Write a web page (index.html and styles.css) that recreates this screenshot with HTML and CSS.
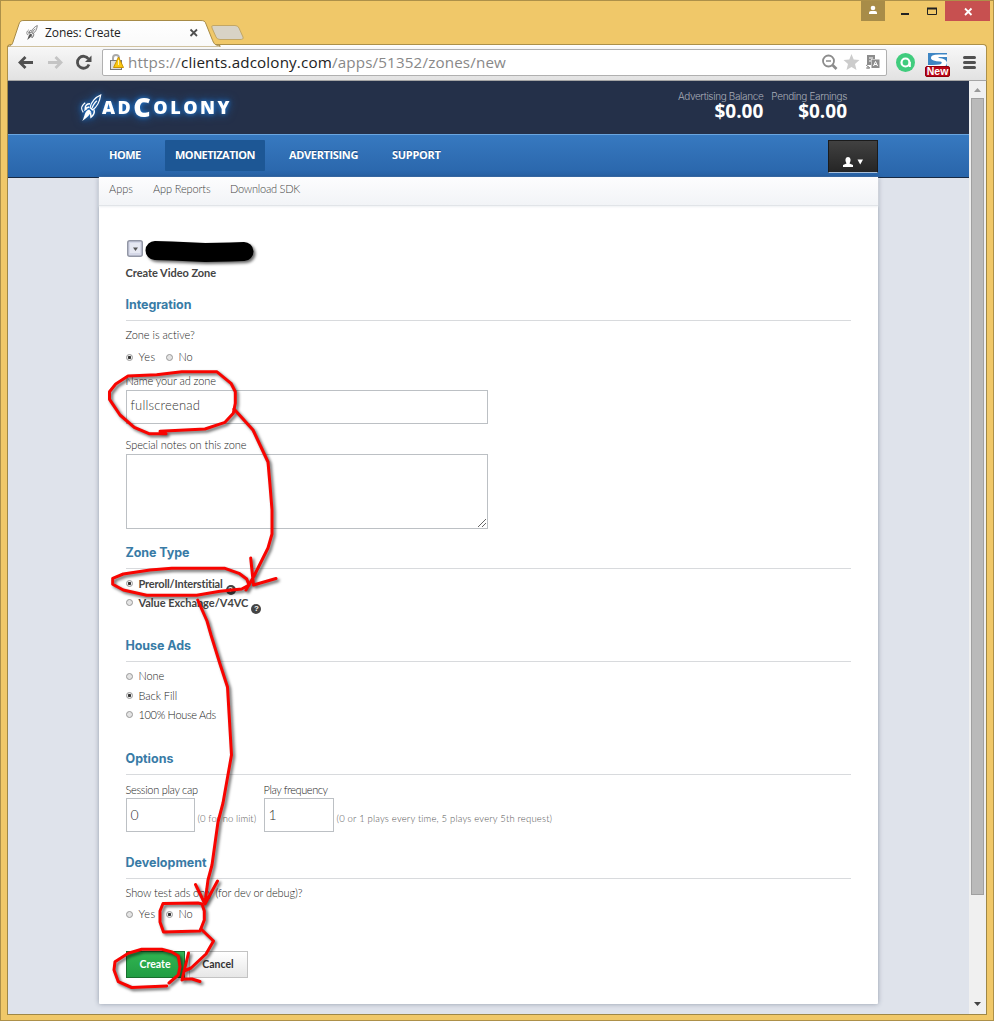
FILE: index.html
```html
<!DOCTYPE html>
<html lang="en">
<head>
<meta charset="utf-8">
<title>Zones: Create</title>
<link rel="stylesheet" href="styles.css">
</head>
<body>
<svg width="0" height="0" class="defs">
  <symbol id="rocket" viewBox="0 0 22 30">
    <path d="M21 1C16 3 11 8 10 14L12.500 16.500C18 13 20 8 21 1ZM17 7C14 10 12.500 12 12 15" fill="none" stroke="currentColor" stroke-width="1.300"/>
    <path d="M10 10C7 10 5 12 5 15L9 13.500M14 16C15 19 13.500 22 11 24L10.500 19" fill="none" stroke="currentColor" stroke-width="1.500"/>
    <path d="M9 16C4 18 5 22 2 28C7 24 10 22 11 18Z" fill="currentColor"/>
    <path d="M5 9C1 12 0 15 3 19M4 17L7 15" fill="none" stroke="currentColor" stroke-width="1.200"/>
  </symbol>
</svg>
<div class="window">
  <header class="titlebar">
    <svg class="tabs" width="250" height="28" viewBox="0 0 250 28">
      <defs><linearGradient id="tab" x2="0" y2="1"><stop offset="0" stop-color="#fff"/><stop offset="1" stop-color="#f9f9f9"/></linearGradient></defs>
      <path d="M0 27.500C4 27 5 26 6 23L12 5C13 2 14 1.500 17 1.500H193C197 1.500 198 2 199 5L205 20C207 25 208 26.500 213 26.500V28H0Z" fill="url(#tab)" stroke="#a78b47"/>
      <path d="M206 6.500H228Q231 6.500 232 9L236 18Q237 20.500 233 20.500H213Q210 20.500 209 18L205 9Q204 6.500 206 6.500Z" fill="#d8d3c6" stroke="#c3a765"/>
      <path d="M183.500 10.500L190 17M190 10.500L183.500 17" stroke="#505050" stroke-width="1.800"/>
    </svg>
    <div class="tab-label"><svg class="favicon"><use href="#rocket"/></svg><span>Zones: Create</span></div>
    <div class="controls">
      <span class="user"><svg width="24" height="20"><circle cx="12" cy="7" r="2.300" fill="#fff"/><path d="M8 13V11.500Q8 10 10 10H14Q16 10 16 11.500V13Z" fill="#fff"/></svg></span>
      <svg width="60" height="20"><path d="M16 13H24" stroke="#222" stroke-width="2"/><path d="M42.500 7.500H51.500V13.500H42.500Z" fill="none" stroke="#222"/><path d="M42 7.500H52" stroke="#222" stroke-width="2"/></svg>
      <span class="close"><svg width="45" height="20"><path d="M20 7.500L26.500 14M26.500 7.500L20 14" stroke="#fff" stroke-width="1.800"/></svg></span>
    </div>
  </header>
  <div class="toolbar">
    <svg class="nav-icons" width="96" height="36" viewBox="0 0 96 36">
      <g fill="none" stroke-width="2.800"><path d="M14 17.500H27M19.500 12L14 17.500L19.500 23" stroke="#505050"/><path d="M42 17.500H55M49.500 12L55 17.500L49.500 23" stroke="#c4c4c4"/><path d="M82.500 14A6 6 0 1 0 83 19.500" stroke="#505050"/></g><path d="M85.500 10.500V17H79Z" fill="#505050"/>
    </svg>
    <div class="address">
      <svg width="18" height="20" viewBox="0 0 18 20"><path d="M4 8V5Q4 2 7 2Q10 2 10 5V8" fill="none" stroke="#aaa" stroke-width="2"/><rect x="1.500" y="7.500" width="11" height="9" fill="#ddd" stroke="#777"/><path d="M9.500 4L14.500 14.500H4.500Z" fill="#fbc810" stroke="#c99306"/><path d="M9.500 7V12" stroke="#fff4b0"/></svg>
      <p class="url">https://<b>clients.adcolony.com</b>/apps/51352/zones/new</p>
      <svg class="url-icons" width="62" height="22" viewBox="0 0 62 22">
        <circle cx="7.500" cy="9" r="5.500" fill="none" stroke="#8c8c8c" stroke-width="1.800"/><path d="M5 9H10" stroke="#8c8c8c" stroke-width="1.500"/><path d="M11.500 13L15.500 17" stroke="#8c8c8c" stroke-width="2.600"/>
        <path d="M30.500 2L32.700 7.500L38.500 8L34 12L35.500 18L30.500 15L25.500 18L27 12L22.500 8L28.300 7.500Z" fill="#ccc"/>
        <path d="M46 3H54V7H50V13H46Z" fill="#8c8c8c"/><path d="M48 6H52M48 9H50" stroke="#fff"/><rect x="50.500" y="7.500" width="8" height="8.500" fill="#8c8c8c"/><path d="M52.500 14L54.500 9.500L56.500 14M53 12.500H56" fill="none" stroke="#fff"/><path d="M45 13L49 16M45 16H49M47 14V17" stroke="#8c8c8c"/>
      </svg>
    </div>
    <svg class="ext" width="92" height="36" viewBox="0 0 92 36">
      <circle cx="13.500" cy="17.500" r="9.500" fill="#40cc7d"/><circle cx="13.500" cy="17.500" r="4" fill="none" stroke="#fff" stroke-width="2.200"/><path d="M17.800 17V22" stroke="#fff" stroke-width="2"/>
      <rect x="36" y="8" width="19" height="15" fill="#3e86c4"/><path d="M55 9.500H47Q38 9.500 39 13.500Q40 16 48 16.500Q51 17 49 19Q47 20 36 20V23H47Q55 22 55 17.500Q54 13.500 47 13Q45 12.500 48 12H55Z" fill="#fff"/>
      <rect x="33.500" y="21.500" width="24" height="10" rx="1.500" fill="#b90719" stroke="#92000c"/><text x="45.500" y="30" text-anchor="middle" class="new">New</text>
      <path d="M72.500 12.500H82.500M72.500 17.500H82.500M72.500 22.500H82.500" stroke="#505050" stroke-width="3" stroke-linecap="round"/>
    </svg>
  </div>
  <div class="viewport">
    <div class="page">
      <div class="masthead">
        <div class="logo"><svg class="logo-mark"><use href="#rocket"/></svg><span class="brand">AD<em>C</em>OLONY</span></div>
        <dl class="balances">
          <div><dt>Advertising Balance</dt><dd>$0.00</dd></div>
          <div><dt>Pending Earnings</dt><dd>$0.00</dd></div>
        </dl>
      </div>
      <nav class="mainnav">
        <a class="n1">HOME</a><a class="n2 active">MONETIZATION</a><a class="n3">ADVERTISING</a><a class="n4">SUPPORT</a>
        <button class="account"><svg width="32" height="12" viewBox="0 0 32 12"><path d="M5 11V9L8.500 7.500Q7 5.500 7.500 3Q8 1 10 1Q12 1 12.500 3Q13 5.500 11.500 7.500L15 9V11Z" fill="#fff"/><path d="M19.500 3.500H25L22.200 8.500Z" fill="#fff"/></svg></button>
      </nav>
      <main class="card">
        <div class="subnav"><a class="s1">Apps</a><a class="s2">App Reports</a><a class="s3">Download SDK</a></div>
        <form class="form">
          <div class="app"><svg width="17" height="18"><rect x=".75" y=".75" width="14.500" height="15.500" rx="2" fill="#d5d8e8" stroke="#9296a5" stroke-width="1.500"/><rect x="3" y="3" width="10" height="10" fill="#e6e8f2"/><path d="M6 7.500H11L8.500 11Z" fill="#555"/></svg></div>
          <p class="row title">Create Video Zone</p>
          <h3 class="h-int">Integration</h3>
          <p class="row mt6 t-active">Zone is active?</p>
          <div class="row mt6"><i class="radio on"></i><span class="t-yes">Yes</span><i class="radio second"></i><span class="t-no">No</span></div>
          <p class="row mt8 t-name">Name your ad zone</p>
          <div class="input wide">fullscreenad</div>
          <p class="row mt13 t-special">Special notes on this zone</p>
          <div class="input area"><svg width="10" height="10"><path d="M1 9L9 1M5 9L9 5" stroke="#555" stroke-width=".9"/></svg></div>
          <h3 class="h-zone">Zone Type</h3>
          <div class="row strong mt7"><i class="radio on up"></i><span class="t-pre">Preroll/Interstitial</span><i class="help">?</i></div>
          <div class="row strong mt3"><i class="radio up"></i><span class="t-val">Value Exchange/V4VC</span><i class="help">?</i></div>
          <h3 class="h-house mt26">House Ads</h3>
          <div class="row mt6"><i class="radio"></i><span class="t-none">None</span></div>
          <div class="row mt4"><i class="radio on up"></i><span class="t-back">Back Fill</span></div>
          <div class="row mt3"><i class="radio up"></i><span class="t-100">100% House Ads</span></div>
          <h3 class="h-opt mt27">Options</h3>
          <div class="fields">
            <label><span class="row t-session">Session play cap</span><span class="line"><span class="input small cap">0</span><small class="t-limit">(0 for no limit)</small></span></label>
            <label><span class="row t-freq">Play frequency</span><span class="line"><span class="input small">1</span><small class="t-plays">(0 or 1 plays every time, 5 plays every 5th request)</small></span></label>
          </div>
          <h3 class="h-dev mt22">Development</h3>
          <p class="row mt6 t-show">Show test ads only (for dev or debug)?</p>
          <div class="row mt5"><i class="radio"></i><span class="t-yes">Yes</span><i class="radio on second"></i><span class="t-no">No</span></div>
          <div class="buttons"><button type="button" class="create">Create</button><button type="button" class="cancel">Cancel</button></div>
        </form>
      </main>
    </div>
    <div class="scrollbar"><svg width="17" height="17"><path d="M5 11H12L8.500 7Z" fill="#999"/></svg><div class="thumb"></div><svg width="17" height="18"><path d="M5 6H12L8.500 10Z" fill="#444"/></svg></div>
  </div>
</div>
<svg class="ink" width="994" height="1021" viewBox="0 0 994 1021">
  <path class="redact" d="M155 250.500L172 251L205 252.500L230 252L244 251.500"/>
  <g class="strokes">
    <path d="M166 433.700H149L134.300 427.300L120 415L109.500 399.300V391.700L115.700 384L128 376L156.700 374.700L181.700 371.700H216.700L231 383.300L235.300 391.700V403.300L233.300 413.300L225 422.300L205 429L160 431.300"/>
    <path d="M234 409L253 430L268 462L270 485L272 510V534L268 548L254 576L246 590M250.700 558L253.500 585L276 578.500"/>
    <path d="M225 568.300H171.700L150 570L123.300 574L112.700 578.300V584.300L123.300 590L146.700 595.300H196.700L220 591.300L241.700 589L249 585L246.700 579L239 573.300Z"/>
    <path d="M197.700 600L207 621L211 635L220 664L227.500 687L231.500 755L223 803L218 822L212 865L208 880L205 903M195.500 884.500L205 904L217.500 881"/>
    <path d="M163 903.500L160 911V922L163.500 932L200 931L204.300 920V911L202 904L198 903Z"/>
    <path d="M201 929L213.500 941L206 954L191 968L184 971M188.500 953L182 980L184 979L192 979L200 981.500"/>
    <path d="M169 983L178.300 975L180 966.700L178.300 956L172 952L161.700 949.300H141.700L128.300 953.300L115 961.700L114 970L118.300 981.700L131.700 987.500L166.700 986"/>
  </g>
</svg>
</body>
</html>
```
FILE: styles.css
```css
* { box-sizing: border-box; }
body { margin: 0; width: 994px; height: 1021px; overflow: hidden; position: relative; font-family: Lato, "Liberation Sans", sans-serif; }
p, h3, dl, dd { margin: 0; }
svg { display: block; flex: none; }
.defs { position: absolute; }
.window { height: 1021px; padding: 0 6px 6px; border: 1px solid #ad9049; background: #f0c869; }
.titlebar { height: 43px; position: relative; display: flex; justify-content: space-between; align-items: flex-start; }
.tabs { margin-top: 18px; margin-bottom: -3px; position: relative; z-index: 1; }
.tab-label { position: absolute; z-index: 2; left: 18px; top: 23px; display: flex; gap: 6px; align-items: center; font: 12px/18px "Open Sans", sans-serif; color: #222; letter-spacing: -.1px; }
.favicon { width: 14px; height: 16px; color: #555; }
.controls { display: flex; height: 20px; margin-right: -3px; }
.user { background: #a88c48; }
.close { background: #c75050; }
.toolbar { height: 37px; display: flex; align-items: flex-start; background: linear-gradient(#fff, #f6f6f6 10%, #e2e2e2); border: 1px solid #ac9049; border-bottom-color: #a5a5a5; border-radius: 4px 4px 0 0; }
.nav-icons { margin-left: -2px; }
.address { width: 785px; height: 27px; margin-top: 4px; background: #fff; border: 1px solid #b0b0b0; border-radius: 2px; display: flex; align-items: center; padding: 0 3px 0 6px; }
.url { flex: 1; margin-left: 1px; font: 15.200px/25px "Open Sans", sans-serif; letter-spacing: .15px; color: #888; white-space: nowrap; }
.url b { font-weight: 400; color: #222; }
.ext { margin-left: 5px; }
.new { font: bold 10.500px "Liberation Sans", sans-serif; fill: #fff; }
.viewport { display: flex; height: 934px; border: 1px solid #9e8747; border-top: 0; }
.page { width: 961px; background: #dfe3eb; }
.masthead { height: 53px; background: #243049; display: flex; justify-content: space-between; padding: 0 122px 0 72px; }
.logo { display: flex; align-items: center; color: #fff; filter: drop-shadow(0 0 2px #2175cc) drop-shadow(0 0 4px #195da8); }
.logo-mark { width: 22px; height: 29px; margin-top: 1px; }
.brand { font: 800 18px/30px "Open Sans", sans-serif; letter-spacing: 2.500px; height: 30px; margin-top: -1px; }
.brand em { font-style: normal; font-size: 27px; line-height: 20px; position: relative; top: 3px; }
.balances { display: flex; gap: 8px; padding-top: 8px; text-align: right; white-space: nowrap; }
.balances dt { font: 300 10px/14px Inter, sans-serif; letter-spacing: -.36px; color: #a8adb8; }
.balances dd { font: bold 19px/17px "Open Sans", sans-serif; color: #fff; letter-spacing: 0; }
.mainnav { height: 44px; padding: 5px 91px 0 91px; display: flex; align-items: flex-start; border-top: 1px solid #6aa5df; border-bottom: 1px solid #172a44; background: linear-gradient(#3779c0, #2965aa); }
.mainnav a { height: 31px; padding: 0 10px; margin-right: 14px; font: bold 11px/29px "Open Sans", sans-serif; letter-spacing: -.5px; color: #fff; text-shadow: 0 -1px 0 #174a84; white-space: nowrap; }
.mainnav .n1 { width: 52px; } .mainnav .n2 { width: 100px; } .mainnav .n3 { width: 89px; letter-spacing: -.35px; } .mainnav .n4 { width: 70px; letter-spacing: -.3px; }
.mainnav .active { background: #1d5795; border-radius: 1px; }
.account { width: 50px; height: 33px; margin: 0 0 0 auto; border: 1px solid #1b1b1b; border-bottom-color: #aac2db; background: linear-gradient(#414141, #252525); padding: 11px 0 0 9px; }
.card { position: relative; width: 779px; height: 827px; margin: -1px 0 0 91px; background: #fff; box-shadow: 0 0 5px rgba(35, 50, 75, .4); border-radius: 1px; }
.subnav { height: 29px; padding: 4px 10px 0; display: flex; background: linear-gradient(#fdfdfe, #f2f4f7); border-bottom: 1px solid #e1e4e8; box-shadow: 0 1px 2px #eef0f3; font: 300 11px/16px Lato, sans-serif; color: #444; white-space: nowrap; }
.s1 { width: 44px; } .s2 { width: 77px; letter-spacing: -.13px; } .s3 { letter-spacing: -.25px; }
.form { padding: 32px 27px 0 26.500px; color: #222; }
.app { height: 24px; padding: 2px 0 0 1px; }
.row { display: flex; align-items: center; height: 16px; font-size: 11px; line-height: 16px; font-weight: 300; white-space: nowrap; }
.title { margin-top: 3px; font-weight: 700; color: #444; letter-spacing: -.03px; }
h3 { height: 25px; margin-top: 15px; padding-top: 1px; border-bottom: 1px solid #d8dadd; font: 700 12.500px/16px Inter, sans-serif; color: #387ba6; }
.h-int, .h-zone, .h-house { letter-spacing: -.07px; }
.mt3 { margin-top: 3px; } .mt4 { margin-top: 4px; } .mt5 { margin-top: 5px; } .mt6 { margin-top: 6px; } .mt7 { margin-top: 7px; } .mt8 { margin-top: 8px; }
.mt13 { margin-top: 13px; } .mt22 { margin-top: 22px; } .mt26 { margin-top: 26px; } .mt27 { margin-top: 27px; }
.radio { width: 7px; height: 7px; margin: 0 6px 0 0; border: 1px solid #999; border-radius: 50%; background: #e4e4e4; flex: none; }
.radio.on { background: radial-gradient(circle, #333 0 1.300px, #eee 2px); }
.radio.up { margin-bottom: 1px; }
.second { margin-left: 10px; }
.t-yes { letter-spacing: .4px; } .t-no { letter-spacing: -.1px; }
.t-active { letter-spacing: -.03px; } .t-name { letter-spacing: -.1px; } .t-special { letter-spacing: -.08px; }
.t-none { letter-spacing: -.1px; } .t-back { letter-spacing: -.05px; } .t-100 { letter-spacing: -.32px; }
.t-session, .t-freq { letter-spacing: -.3px; } .t-freq { letter-spacing: -.4px; } .t-show { letter-spacing: -.1px; }
.strong { font-weight: 700; color: #444; }
.t-pre { letter-spacing: -.18px; } .t-val { letter-spacing: -.03px; }
.help { width: 10px; height: 10px; margin: 11px 0 0 3px; border-radius: 50%; background: #444; color: #fff; font: bold 8px/10px "Liberation Sans", sans-serif; text-align: center; flex: none; }
.input { display: flex; margin-top: 1px; border: 1px solid #bcc0c4; background: #fff; font: 300 13px/28px Lato, sans-serif; letter-spacing: .18px; color: #333; }
.wide { width: 362px; height: 34px; padding-left: 4px; }
.area { width: 362px; height: 75px; align-items: flex-end; justify-content: flex-end; }
.fields { display: flex; margin-top: 7px; }
.fields .row { height: 15px; }
.fields label:first-child { width: 138px; }
.line { display: flex; }
.small { width: 70px; height: 34px; padding-left: 4px; flex: none; font-size: 14px; line-height: 31px; }
.cap { width: 69px; }
.line small { margin: 15px 0 0 3px; font: 300 9.500px/14px Lato, sans-serif; color: #555; white-space: nowrap; }
.line .t-plays { letter-spacing: .18px; } .line .t-limit { letter-spacing: .08px; }
.buttons { display: flex; gap: 4px; margin-top: 29px; }
.buttons button { height: 27px; padding: 0; font: 700 10.500px/25px Lato, sans-serif; }
.create { width: 59px; border: 1px solid #19702e; background: linear-gradient(#31b552, #229d43); color: #fff; }
.cancel { width: 59px; border: 1px solid #c3c3c3; background: linear-gradient(#fff, #e7e7e7); color: #333; }
.scrollbar { width: 17px; background: #f0f0f0; display: flex; flex-direction: column; }
.thumb { width: 13px; height: 797px; margin-left: 2px; background: #bababa; border: 1px solid #a0a0a0; }
.scrollbar svg:last-child { margin-top: auto; }
.ink { position: absolute; inset: 0; pointer-events: none; filter: drop-shadow(2px 2px 1.500px rgba(0, 0, 0, .6)); }
.ink path { fill: none; stroke-linecap: round; stroke-linejoin: round; }
.strokes path { stroke: #f80400; stroke-width: 3; }
.ink .redact { stroke: #000; stroke-width: 19; }
```
